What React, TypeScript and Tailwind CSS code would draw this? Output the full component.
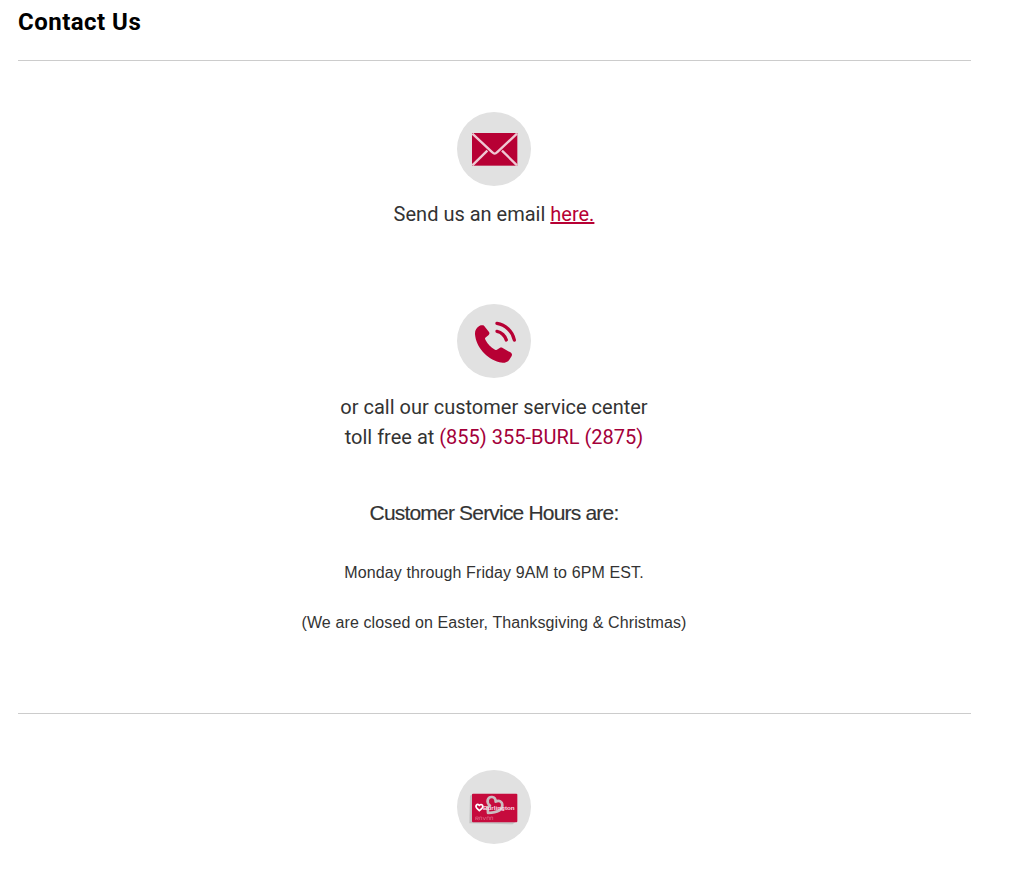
import type { ReactNode } from "react";

// Grey disc shared by all three contact icons. Artwork inside uses a
// 222-unit square, i.e. three units per rendered pixel.
function IconDisc({ label, children }: { label: string; children: ReactNode }) {
  return (
    <svg role="img" aria-label={label} width="74" height="74" viewBox="0 0 222 222" className="block shrink-0">
      <circle cx="111" cy="111" r="111" fill="#e1e1e1" />
      {children}
    </svg>
  );
}

function EmailIcon() {
  return (
    <IconDisc label="Email">
      <rect x="45" y="63" width="136" height="98" fill="#b70034" />
      <g fill="none" stroke="#efc8d3" strokeWidth="7">
        <path d="M46 65 L106 121 Q113 129 120 121 L180 65" />
        <path d="M46 160 L91 116" />
        <path d="M180 160 L135 116" />
      </g>
    </IconDisc>
  );
}

function PhoneIcon() {
  return (
    <IconDisc label="Phone">
      <g transform="translate(-21 -21)">
        <path
          fill="#b70034"
          d="M98 85 C101 85 103 87 105 90 L117 105 C119 108 119 111 116 114 L106 122 C104 124 105 127 107 130 C113 141 122 151 135 158 C138 160 141 159 143 157 L149 153 C152 151 155 151 158 153 L181 166 C186 169 187 173 185 177 L178 188 C172 197 160 199 148 196 C110 186 78 150 75 112 C74 100 80 92 88 87 C91 85 95 85 98 85 Z"
        />
        <g fill="none" stroke="#b70034" strokeWidth="10" strokeLinecap="round">
          <path d="M141 79 C166 83 188 103 193 129" />
          <path d="M141 103 C154 105 166 117 169 129" />
        </g>
      </g>
    </IconDisc>
  );
}

function CardIcon() {
  return (
    <IconDisc label="Gift card">
      <g transform="translate(-21 -24)">
        <path d="M60 101 L67 97 L196 180 L188 187 L58 184 Z" fill="#c4c4c4" />
        <rect x="66" y="95" width="136" height="86" rx="3" fill="#c60b3d" />
        {/* tilted heart behind the wordmark */}
        <path
          d="M114 153 L113 136 L120 131 C107 120 113 104 126 105 C134 106 137 112 137 119 C147 113 157 119 157 130 C157 144 142 152 114 153 Z"
          fill="none"
          stroke="#cbbdc1"
          strokeWidth="8"
          strokeLinejoin="round"
        />
        <path
          d="M88 146 L81 139 C74 131 81 124 88 130 C95 124 102 131 96 139 Z"
          fill="none"
          stroke="#fff"
          strokeWidth="5"
        />
        <text x="99" y="143" textLength="95" lengthAdjust="spacingAndGlyphs" fontSize="17" fontWeight="700" fill="#f6dfe6" className="font-['Liberation_Sans',sans-serif]">
          Burlington
        </text>
        <path d="M77 174 v-9 h8 v5 h-6 l7 4 M89 174 v-9 h6 v9 M99 165 l4 9 4 -9 M111 174 v-9 h7 v9 M122 174 v-9 h6 v9" fill="none" stroke="#df6a89" strokeWidth="2" />
      </g>
    </IconDisc>
  );
}

export default function App() {
  return (
    <main className="h-[885px] w-full overflow-hidden bg-white pl-[18px] font-[Roboto,sans-serif] text-[#333]">
      <div className="w-[953px]">
        <h1 className="h-[60px] pt-[8px] text-2xl leading-[28px] font-bold tracking-[0.48px] text-black">Contact Us</h1>

        <section className="flex flex-col items-center border-y border-[#ccc] pt-[51px] pr-px pb-[78px] text-center">
          <EmailIcon />
          <p className="mt-[13px] text-xl leading-[30px]">
            Send us an email{" "}
            <a href="#email" className="text-[#b70034] underline">here.</a>
          </p>

          <div className="mt-[75px]">
            <PhoneIcon />
          </div>
          <p className="mt-[14px] text-xl leading-[30px]">
            or call our customer service center
            <br />
            toll free at <a href="tel:8553552875" className="text-[#a4003a]">(855) 355-BURL (2875)</a>
          </p>

          <h2 className="mt-[46px] font-['Liberation_Sans',sans-serif] text-[21px] leading-[30px] tracking-[-0.81px] [-webkit-text-stroke:0.15px_#333]">
            Customer Service Hours are:
          </h2>
          <div className="mt-[33px] flex flex-col gap-[26px] font-['Liberation_Sans',sans-serif] text-base leading-6 tracking-[0.115px]">
            <p>Monday through Friday 9AM to 6PM EST.</p>
            <p>(We are closed on Easter, Thanksgiving &amp; Christmas)</p>
          </div>
        </section>

        <section className="flex justify-center pt-[56px] pr-px">
          <CardIcon />
        </section>
      </div>
    </main>
  );
}
